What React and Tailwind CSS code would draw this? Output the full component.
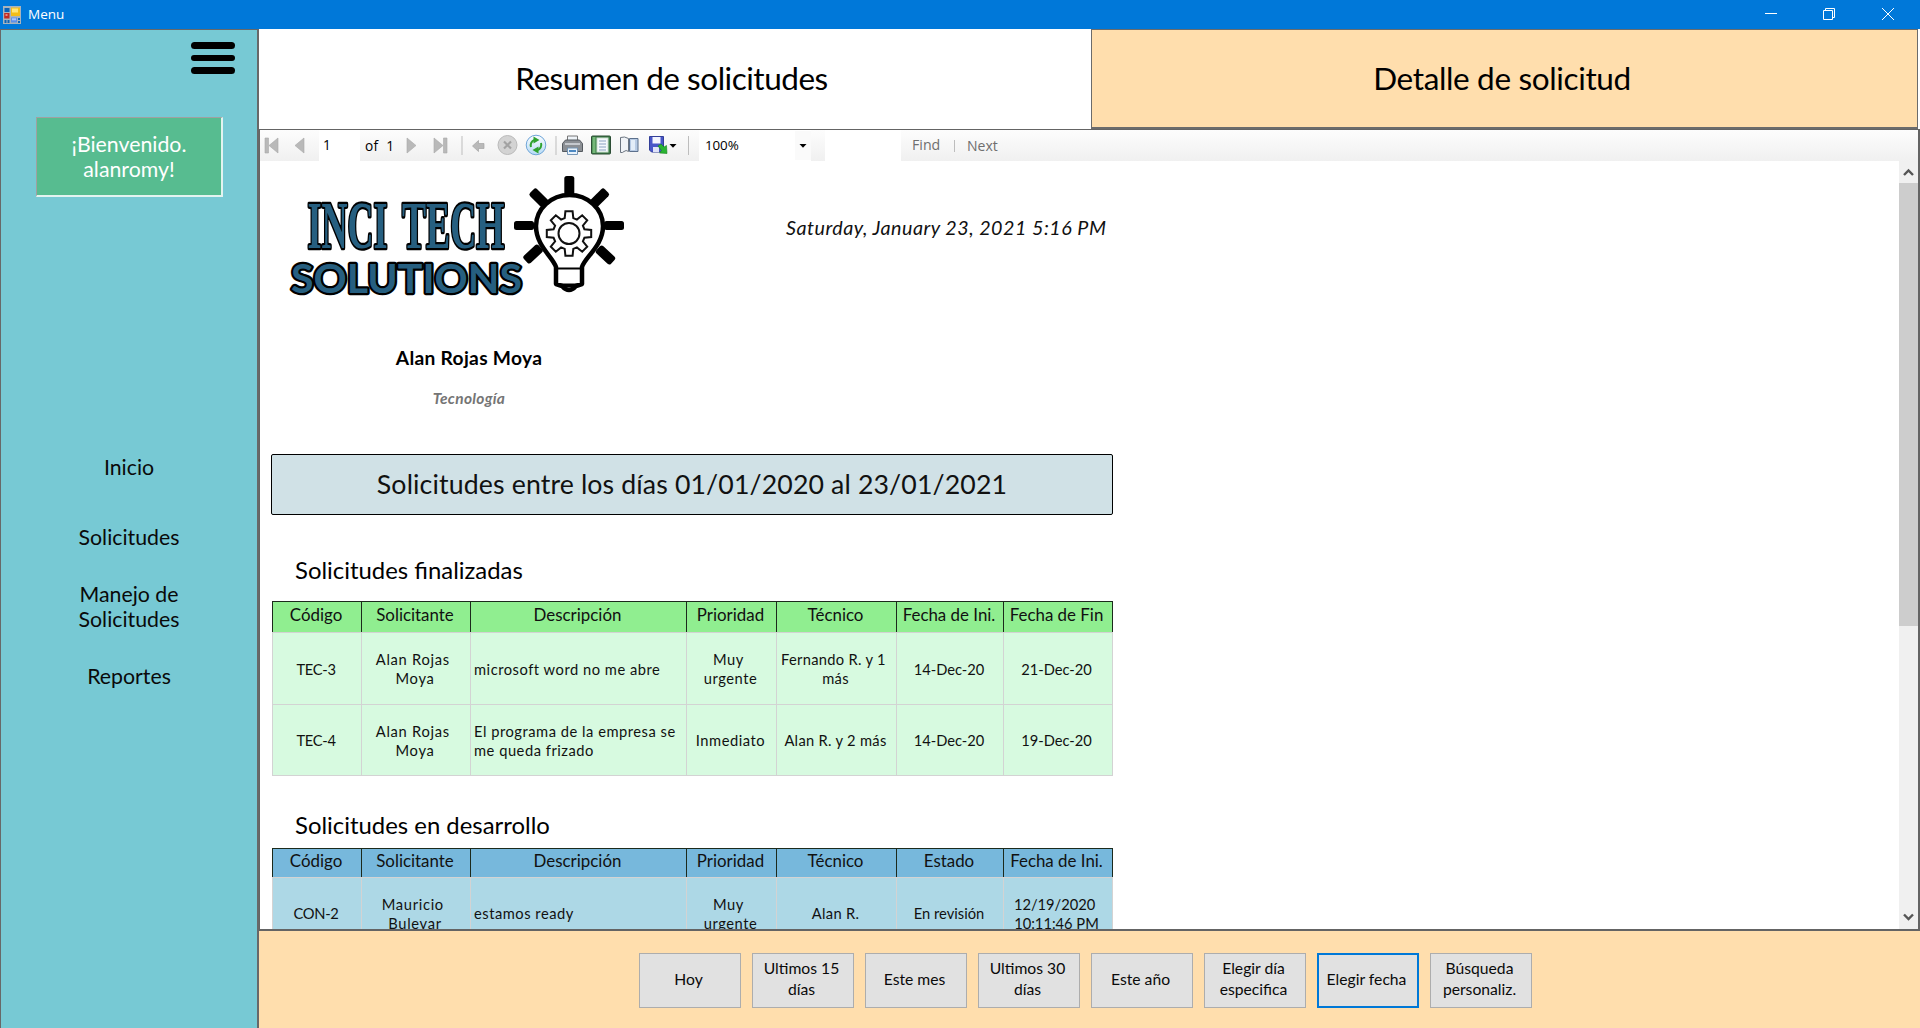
const COLS = "grid grid-cols-[89px_109px_216px_90px_120px_107px_108px]";

const finished = {
  head: ["Código", "Solicitante", "Descripción", "Prioridad", "Técnico", "Fecha de Ini.", "Fecha de Fin"],
  rows: [
    [["TEC-3"], ["Alan Rojas", "Moya"], ["microsoft word no me abre"], ["Muy", "urgente"], ["Fernando R. y 1", "más"], ["14-Dec-20"], ["21-Dec-20"]],
    [["TEC-4"], ["Alan Rojas", "Moya"], ["El programa de la empresa se", "me queda frizado"], ["Inmediato"], ["Alan R. y 2 más"], ["14-Dec-20"], ["19-Dec-20"]],
  ],
};
const inProgress = {
  head: ["Código", "Solicitante", "Descripción", "Prioridad", "Técnico", "Estado", "Fecha de Ini."],
  rows: [
    [["CON-2"], ["Mauricio", "Bulevar"], ["estamos ready"], ["Muy", "urgente"], ["Alan R."], ["En revisión"], ["12/19/2020", "10:11:46 PM"]],
  ],
};
const buttons = [["Hoy"], ["Ultimos 15", "días"], ["Este mes"], ["Ultimos 30", "días"], ["Este año"], ["Elegir día", "especifica"], ["Elegir fecha"], ["Búsqueda", "personaliz."]];
const tracking = ["tracking-[-0.3px]", "tracking-[0.7px]", "tracking-[0.52px]", "tracking-[0.55px]", "tracking-[0.3px]", "tracking-[0px]", "tracking-[0px]"];

function Lines({ lines, keepSpace }) {
  return lines.map((l, i) => (
    <div key={i} className="whitespace-pre">
      {keepSpace && i < lines.length - 1 ? l + "\u00a0" : l}
    </div>
  ));
}

function Table({ data, headClass, bodyClass, headHeight }) {
  return (
    <div className="ml-[12px] w-[841px]">
      <div className={`${COLS} ${headHeight} border-t border-r border-[#1c2a1c] ${headClass}`}>
        {data.head.map((h) => (
          <div key={h} className="flex items-center justify-center whitespace-nowrap border-l border-[#1c2a1c] pr-[2px] pb-[4px] text-[16.9px] leading-5">
            {h}
          </div>
        ))}
      </div>
      {data.rows.map((r, i) => (
        <div key={i} className={`${COLS} h-[72px] border-t border-r border-[#d3d3d3] last:border-b ${bodyClass}`}>
          {r.map((lines, j) => (
            <div
              key={j}
              className={`flex flex-col justify-center border-l border-[#d3d3d3] pt-px text-[14.7px] leading-[19px] ${tracking[j]} ${j === 2 ? "pl-[3px] text-left" : "items-center pr-[2px] text-center"}`}
            >
              <Lines lines={lines} keepSpace={j !== 2} />
            </div>
          ))}
        </div>
      ))}
    </div>
  );
}

function AppIcon() {
  return (
    <svg width="18" height="18" viewBox="0 0 18 18" className="ml-[3px]">
      <rect width="18" height="18" fill="#a9b4bd" />
      <rect x="1.5" y="2" width="5" height="4" fill="#0a63b8" />
      <rect x="8" y="1.5" width="9" height="8.5" fill="#f3bd18" />
      <rect x="9" y="2.5" width="6" height="4" fill="#ffe678" />
      <rect x="1.2" y="7" width="5.3" height="5.5" fill="#c02a22" />
      <rect x="2.5" y="8" width="2" height="2" fill="#e88a80" />
      <rect x="1.5" y="14" width="2" height="3" fill="#0a63b8" />
      <rect x="4.5" y="14" width="2" height="3" fill="#0a63b8" />
      <rect x="8" y="11.5" width="6" height="5" fill="#5f8fe8" />
      <rect x="9" y="12.3" width="4" height="2" fill="#a8c5ff" />
      <rect x="15" y="12" width="2" height="2" fill="#0a63b8" />
      <rect x="15" y="15" width="2" height="2" fill="#0a63b8" />
    </svg>
  );
}

function Logo() {
  const gear = [];
  for (let i = 0; i < 8; i++) {
    const a = (i * Math.PI) / 4 - Math.PI / 2;
    [[-0.27, 16], [-0.16, 22.5], [0.16, 22.5], [0.27, 16]].forEach(([d, r]) => gear.push(`${(569 + r * Math.cos(a + d)).toFixed(1)},${(233.5 + r * Math.sin(a + d)).toFixed(1)}`));
  }
  return (
    <svg width="345" height="135" viewBox="285 165 345 135" className="ml-[25px] mt-1 block">
      <g fill="#265f80" stroke="#000" strokeLinejoin="round" paintOrder="stroke">
        <g fontFamily="Liberation Serif" fontWeight="700" fontSize="68" strokeWidth="4.600">
          <text transform="translate(307.500 248) scale(0.5 1)" textLength="160" lengthAdjust="spacingAndGlyphs">INCI</text>
          <text transform="translate(402 248) scale(0.5 1)" textLength="205" lengthAdjust="spacingAndGlyphs">TECH</text>
        </g>
        <text x="291" y="292.500" fontFamily="Lato" fontWeight="700" fontSize="41" strokeWidth="4.500" textLength="231" lengthAdjust="spacingAndGlyphs">SOLUTIONS</text>
      </g>
      <g fill="#000">
        <rect x="564.3" y="176" width="10" height="19" rx="2.5" />
        <rect x="514" y="221" width="20" height="9" rx="2.5" />
        <rect x="604" y="221" width="20" height="9" rx="2.5" />
        <rect x="-10" y="-5" width="20" height="10" rx="2.5" transform="translate(539 198) rotate(45)" />
        <rect x="-10" y="-5" width="20" height="10" rx="2.5" transform="translate(599.500 198) rotate(-45)" />
        <rect x="-10" y="-5" width="20" height="10" rx="2.500" transform="translate(533 254) rotate(-43)" />
        <rect x="-10" y="-5" width="20" height="10" rx="2.500" transform="translate(605.500 255) rotate(43)" />
      </g>
      <path d="M556 267 C553 257 536 246 536 226 A33.500 31 0 0 1 603 226 C603 246 585 257 582 267 V284 L576 286 Q569 294 562 286 L556 284 Z" fill="#fff" stroke="#000" strokeWidth="4.500" strokeLinejoin="round" />
      <path d="M556 268.500 H582 M558 284.500 H580 M563 286.500 H575" stroke="#000" strokeWidth="2.200" fill="none" />
      <polygon points={gear.join(" ")} fill="#fff" stroke="#111" strokeWidth="2" />
      <circle cx="569" cy="233.500" r="10.500" fill="#fff" stroke="#111" strokeWidth="2" />
    </svg>
  );
}

function NavIcon({ kind }) {
  const d = {
    first: "M1 1h3.500v15H1zM14 1v15L5 8.500z",
    prev: "M11 1v15L2 8.500z",
    next: "M2 1v15l9-7.500z",
    last: "M10.500 1H14v15h-3.500zM1 1v15l9-7.500z",
  }[kind];
  return (
    <svg width="15" height="17" viewBox="0 0 15 17" className="shrink-0">
      <path d={d} fill="#b9b9b9" stroke="#a9a9a9" strokeWidth="0.600" />
    </svg>
  );
}

/* Report actions: back, stop, refresh, print, print layout, page setup, export. */
function ToolIcons() {
  return (
    <svg width="232" height="31" viewBox="460 130 232 31" className="shrink-0">
      <defs>
        <linearGradient id="blue" x1="0" y1="0" x2="0" y2="1">
          <stop offset="0" stopColor="#fafdff" />
          <stop offset="1" stopColor="#b5daf5" />
        </linearGradient>
      </defs>
      <path d="M462 136v19M556 136v19M688.500 136v19" stroke="#bdbdbd" />
      <path d="M472.500 146l6-5.500v3h5.500v5h-5.500v3z" fill="#b9b9b9" stroke="#a5a5a5" strokeWidth="0.700" />
      <circle cx="507.500" cy="145" r="9.500" fill="#d3d3d3" stroke="#bababa" />
      <path d="M504 141.500l7 7M511 141.500l-7 7" stroke="#a2a2a2" strokeWidth="2.200" />
      <circle cx="536" cy="145" r="9.800" fill="url(#blue)" stroke="#6fa5d8" />
      <g fill="none" stroke="#2fa32f" strokeWidth="2">
        <path d="M531 147a5.500 5.500 0 0 1 3.500-7" />
        <path d="M541 143a5.500 5.500 0 0 1-3.500 7" />
      </g>
      <path d="M533.500 136.500l6 3.500-6 3.500zM538.500 146.500v7l-6-3.500z" fill="#2fa32f" />
      <path d="M567.500 142v-6h10v6z" fill="#eef3f8" stroke="#777" />
      <path d="M562.500 143.500l3-3.500h14l3 3.500v8h-20z" fill="#8b8f94" stroke="#555a60" />
      <path d="M565 144h15" stroke="#d9dde2" strokeWidth="1.500" />
      <path d="M567.500 148h10v6.500h-10z" fill="#e8f2fb" stroke="#7595b5" />
      <path d="M569 151h7" stroke="#4c88c2" strokeWidth="2" />
      <rect x="591.500" y="136" width="19" height="18" rx="1" fill="#397a45" stroke="#2c4d35" />
      <rect x="592.500" y="137" width="3" height="16" fill="#75b779" />
      <rect x="597" y="138" width="11" height="14" fill="#f4f8fc" stroke="#cfe0d2" />
      <path d="M599 141h7M599 144h7M599 147h7M599 150h7" stroke="#8aa2c0" />
      <path d="M620.500 137.500q4-1.500 8 1v13q-2.500-2-4.500 0-1.500 1.500-3.500 1z" fill="#f0f3f7" stroke="#6b7480" />
      <path d="M629.500 138.500h8.500v13h-8.500z" fill="#b8cbe4" stroke="#5c708c" />
      <path d="M631 140h4v10h-4z" fill="#e3edf8" />
      <path d="M649.500 136.500h14v15.500h-12l-2-2z" fill="#4856c8" stroke="#333f98" />
      <path d="M652.500 137h8v6.500h-8z" fill="#f3f5ff" />
      <path d="M653 147h6v5h-6z" fill="#dfe3f8" />
      <path d="M658 146l3-2 3 3 2.500-1.500 0.500 8-7.500-0.500 2-2.500z" fill="#29b432" stroke="#17801f" strokeWidth="0.600" />
      <path d="M669.500 144h7l-3.500 3.800z" fill="#000" />
    </svg>
  );
}

function Toolbar() {
  return (
    <div className="flex h-[31px] shrink-0 items-center bg-linear-to-b from-[#fdfdfd] to-[#f0f0f0] font-['Open_Sans',sans-serif] text-[13.7px] text-black">
      <div className="ml-[4px] flex"><NavIcon kind="first" /></div>
      <div className="ml-[14px] flex"><NavIcon kind="prev" /></div>
      <div className="ml-[11px] h-[31px] w-[41px] bg-white pl-[4px] leading-[29px]">1</div>
      <div className="ml-[5px] w-[40px] whitespace-pre leading-[29px] tracking-[0.3px]">of  1</div>
      <div className="flex"><NavIcon kind="next" /></div>
      <div className="ml-[13px] flex"><NavIcon kind="last" /></div>
      <div className="ml-[12px] flex"><ToolIcons /></div>
      <div className="ml-[7px] flex h-[31px] w-[112px] items-center justify-between bg-white pl-[6px] text-[13.4px]">
        <span className="tracking-[-0.1px]">100%</span>
        <svg width="16" height="29" viewBox="0 0 16 29"><rect width="16" height="29" fill="#fafafa" /><path d="M4.500 13h7l-3.500 3.800z" fill="#000" /></svg>
      </div>
      <div className="ml-[14px] h-[31px] w-[76px] bg-white" />
      <span className="ml-[11px] w-[42px] pb-px text-[14.2px] text-[#6f6f6f]">Find</span>
      <span className="h-3 w-px bg-[#bdbdbd]" />
      <span className="ml-[12px] pb-px text-[14px] text-[#6f6f6f]">Next</span>
    </div>
  );
}

function Sidebar() {
  return (
    <aside className="flex w-[259px] shrink-0 flex-col border-t border-r-2 border-l border-[#686868] bg-[#77c9d4] text-center text-[21.3px] leading-[25px]">
      <div className="mt-[12px] ml-[190px] flex w-[44px] flex-col gap-[6px]">
        <div className="h-[6.500px] rounded-full bg-black" />
        <div className="h-[6.500px] rounded-full bg-black" />
        <div className="h-[6.500px] rounded-full bg-black" />
      </div>
      <div className="mt-[43px] ml-[35px] h-[80px] w-[187px] border-t border-r-2 border-b-2 border-l border-t-[#a0a0a0] border-r-[#e3f3f0] border-b-[#e3f3f0] border-l-[#a0a0a0] bg-[#57bc90] pt-[14px] text-white">
        <div>¡Bienvenido.</div>
        <div>alanromy!</div>
      </div>
      <nav className="mt-[258px] flex flex-col">
        <div>Inicio</div>
        <div className="mt-[45px]">Solicitudes</div>
        <div className="mt-[32px]">Manejo de<br />Solicitudes</div>
        <div className="mt-[32px]">Reportes</div>
      </nav>
    </aside>
  );
}

function ScrollBar() {
  return (
    <div className="flex w-[19px] shrink-0 flex-col bg-[#f0f0f0]">
      <svg width="19" height="22" viewBox="0 0 19 22"><path d="M5 14l4.500-4.500L14 14" fill="none" stroke="#555" strokeWidth="2.400" /></svg>
      <div className="h-[443px] bg-[#cdcdcd]" />
      <svg width="19" height="22" viewBox="0 0 19 22" className="mt-auto"><path d="M5 7.500l4.500 4.500L14 7.500" fill="none" stroke="#555" strokeWidth="2.400" /></svg>
    </div>
  );
}

function Report() {
  return (
    <div className="h-full min-w-0 flex-1 overflow-hidden bg-white text-[#111]">
      <div className="flex h-[183px]">
        <Logo />
        <div className="mt-[53px] ml-[156px] whitespace-nowrap text-[19.700px] italic leading-7 tracking-[0.5px]">Saturday, January 23, 2021 5:16 PM</div>
      </div>
      <div className="-mt-px ml-[109px] w-[200px] text-center text-[19.200px] font-bold leading-[30px] tracking-[0.3px] text-black">Alan Rojas Moya</div>
      <div className="mt-[13px] ml-[109px] w-[200px] text-center text-[15.500px] font-bold italic leading-6 tracking-[0.3px] text-[#757575]">Tecnología</div>
      <div className="mt-[44px] ml-[11px] h-[61px] w-[842px] rounded-[2px] border border-black bg-[#d0e1e6] text-center text-[26.700px] leading-[59px] tracking-[0.13px]">
        Solicitudes entre los días 01/01/2020 al 23/01/2021
      </div>
      <div className="mt-[35px] ml-[35px] h-[51px] text-[23.900px] leading-[40px] text-black">Solicitudes finalizadas</div>
      <Table data={finished} headClass="bg-[#90ee90]" bodyClass="bg-[#d7fae0]" headHeight="h-[31px]" />
      <div className="mt-[29px] ml-[35px] h-[43px] text-[23.900px] leading-[40px] text-black">Solicitudes en desarrollo</div>
      <Table data={inProgress} headClass="bg-[#77b8dc]" bodyClass="bg-[#add8e6]" headHeight="h-[29px]" />
    </div>
  );
}

export default function App() {
  return (
    <div className="flex h-[1028px] w-[1920px] flex-col overflow-hidden bg-white font-[Lato,sans-serif] text-[#0a0a0a]">
      <header className="flex h-[29px] shrink-0 items-center bg-[#0078d9] font-['Open_Sans',sans-serif] text-white">
        <AppIcon />
        <span className="ml-[7px] flex-1 text-[13.500px]">Menu</span>
        <svg width="155" height="29" viewBox="1765 0 155 29" fill="none" stroke="#fff">
          <path d="M1765 13.500h12M1823.500 10.500h9v9h-9zM1825.500 10.500v-2h9v9h-2M1882 8l12 12M1894 8l-12 12" />
        </svg>
      </header>
      <div className="flex min-h-0 flex-1">
        <Sidebar />
        <main className="flex min-w-0 flex-1 flex-col">
          <div className="flex h-[100px] shrink-0 text-[31.500px] tracking-[-0.47px] text-black">
            <div className="w-[832px] pr-[7px] text-center leading-[99px]">Resumen de solicitudes</div>
            <div className="w-[827px] border border-b-2 border-[#6b6b6b] bg-[#ffdead] pr-[5px] text-center leading-[97px] tracking-[-0.35px]">Detalle de solicitud</div>
          </div>
          <div className="flex h-[802px] shrink-0 flex-col border-t border-r-2 border-b-2 border-l border-[#646464]">
            <Toolbar />
            <div className="flex h-[768px]">
              <Report />
              <ScrollBar />
            </div>
          </div>
          <div className="flex flex-1 gap-[11px] bg-[#ffdead] pt-[22px] pl-[380px]">
            {buttons.map((b, i) => (
              <button
                key={i}
                className={`flex h-[55px] w-[102px] flex-col items-center justify-center bg-[#e1e1e1] pr-[3px] pb-[3px] text-[15.700px] leading-[21px] ${i === 6 ? "border-2 border-[#0078d7]" : "border border-[#adadad]"}`}
              >
                <Lines lines={b} />
              </button>
            ))}
          </div>
        </main>
      </div>
    </div>
  );
}
